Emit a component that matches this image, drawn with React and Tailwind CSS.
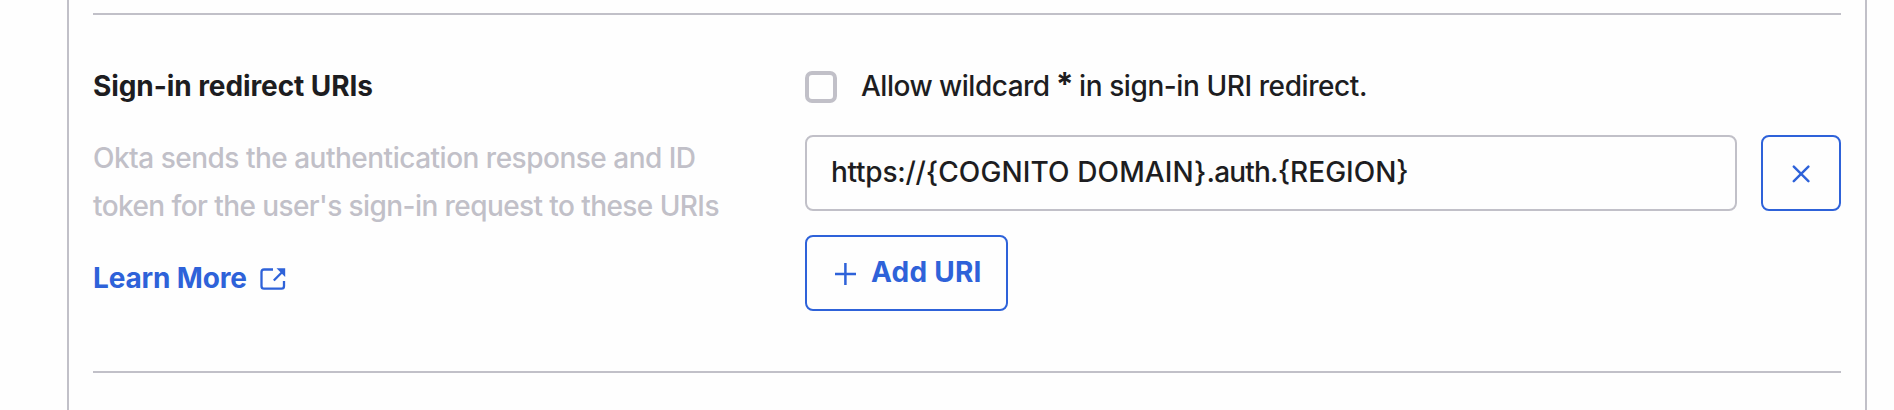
import React from "react";

function ExternalIcon() {
  return (
    <svg className="mt-[2px] h-[22px] w-[26px]" viewBox="0 0 26 22" fill="none" stroke="currentColor" strokeWidth="2.3">
      <path d="M13 1.5H4Q1.5 1.5 1.5 4V18Q1.5 20.7 4 20.7H21.5Q24 20.7 24 18V13" />
      <path d="M13.8 12.5L23 3.2" />
      <path d="M16.5 0.3H25.2V9Z" fill="currentColor" stroke="none" />
    </svg>
  );
}

export default function App() {
  return (
    <div className="h-[410px] w-[1894px] overflow-hidden bg-[#fefefe] pl-[67px] pr-[27px] font-['Inter',sans-serif] text-[28px] leading-[48px] text-[#1d1d21]">
      <main className="h-full border-x-2 border-[#c1c0c8] px-6 pt-[13px]">
        <section className="flex h-[360px] border-y-2 border-[#c1c0c8]">
          <div className="mt-[47px] w-[712px] shrink-0">
            <h2 className="whitespace-nowrap font-bold tracking-[-0.08px]">Sign-in redirect URIs</h2>
            <p className="mt-6 whitespace-nowrap font-medium text-[#c1c0c8]">
              <span className="tracking-[-0.5px]">Okta sends the authentication response and ID</span>
              <br />
              <span className="tracking-[-0.58px]">token for the user's sign-in request to these URIs</span>
            </p>
            <a className="mt-6 flex items-center font-bold text-[#2e62d9]">
              <span className="w-[167px] whitespace-nowrap tracking-[-0.15px]">Learn More</span>
              <ExternalIcon />
            </a>
          </div>
          <div className="flex-1 pt-[47px]">
            <label className="flex items-center">
              <span className="mt-[2px] h-8 w-8 rounded-[7px] border-4 border-[#c1c0c8]" />
              <span className="ml-6 whitespace-nowrap font-medium tracking-[-0.5px]">
                Allow wildcard <span className="-ml-px text-[32px] leading-none font-bold">*</span>
                <span className="-ml-px tracking-[-0.42px]"> in sign-in URI redirect.</span>
              </span>
            </label>
            <div className="mt-[25px] flex gap-6">
              <div className="flex h-[76px] w-[932px] items-center rounded-lg border-2 border-[#c1c0c8] px-6">
                <span className="-mt-[2px] whitespace-nowrap font-medium">
                  <span className="tracking-[-0.25px]">https://</span>
                  <span className="tracking-[0.12px]">{"{COGNITO DOMAIN}"}</span>
                  <span className="tracking-[-0.8px]">.auth.</span>
                  <span>{"{REGION}"}</span>
                </span>
              </div>
              <button className="flex h-[76px] w-20 items-center justify-center rounded-lg border-2 border-[#2e62d9] text-[#2e62d9]">
                <svg className="mt-[2px] h-[18px] w-[18px]" viewBox="0 0 18 18" fill="none" stroke="currentColor" strokeWidth="2.4" strokeLinecap="round">
                  <path d="M1.8 1.6L16.4 16.2M16.4 1.6L1.8 16.2" />
                </svg>
              </button>
            </div>
            <button className="mt-6 flex h-[76px] w-[203px] items-center rounded-lg border-2 border-[#2e62d9] pl-7 text-[#2e62d9]">
              <svg className="mt-[2px] h-[22px] w-[21px]" viewBox="0 0 21 22" fill="none" stroke="currentColor" strokeWidth="2.5">
                <path d="M0 10.9H21M10.4 0V22" />
              </svg>
              <span className="-mt-[2px] ml-[15px] whitespace-nowrap font-bold tracking-[0.25px]">Add URI</span>
            </button>
          </div>
        </section>
      </main>
    </div>
  );
}
